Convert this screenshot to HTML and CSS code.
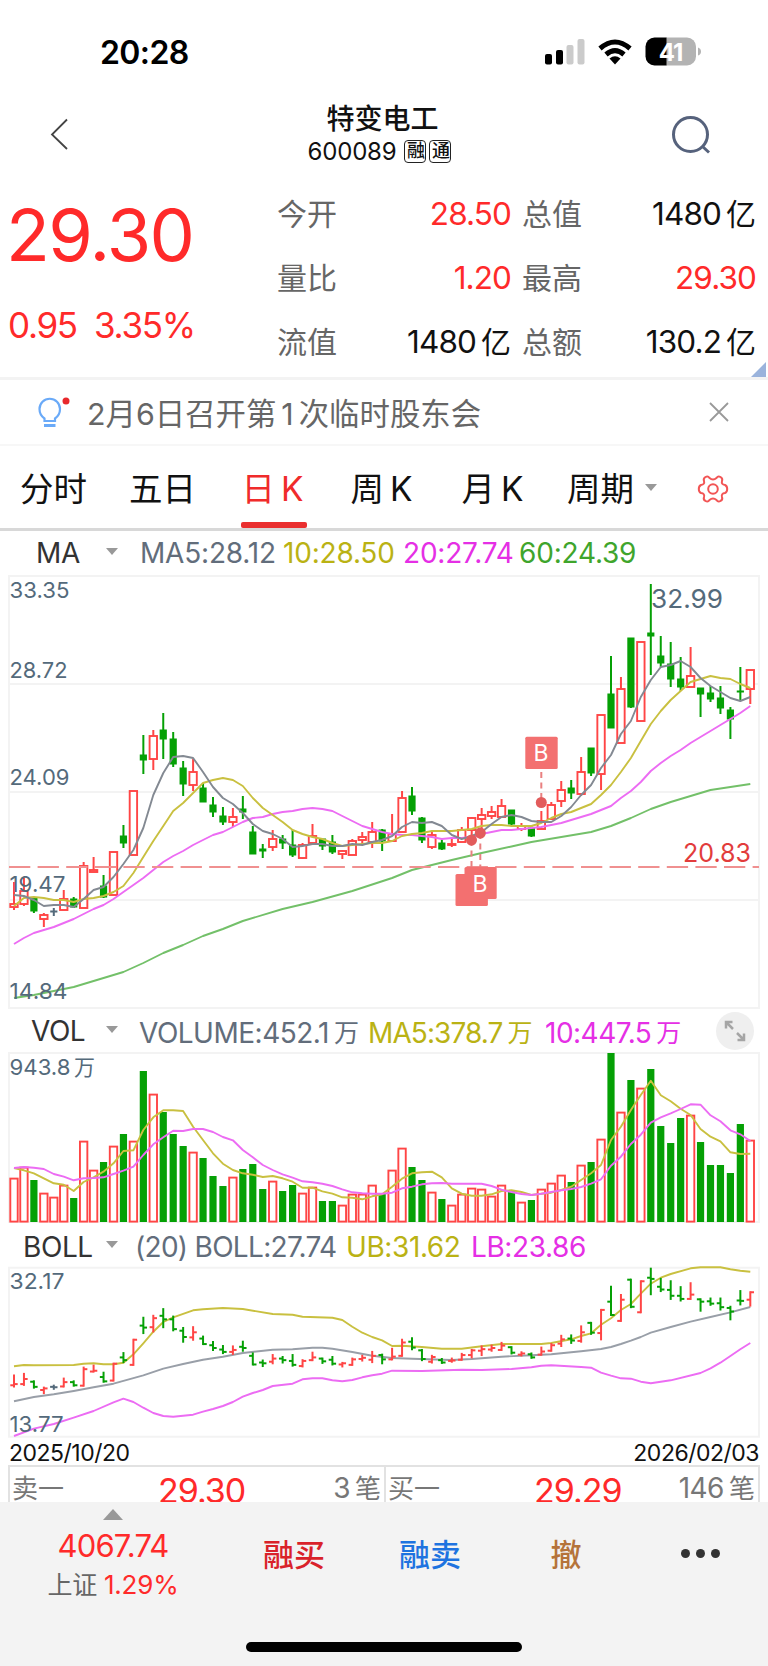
FILE: index.html
```html
<!DOCTYPE html>
<html lang="zh-CN">
<head>
<meta charset="UTF-8">
<meta name="viewport" content="width=device-width, initial-scale=1.0">
<title>特变电工 600089</title>
<link rel="stylesheet" href="styles.css">
</head>
<body>
<div class="app">
  <div class="status">
    <span class="time">20:28</span>
    <svg class="status-icons" width="158" height="30" viewBox="544 36 158 30">
      <rect x="545" y="54" width="7" height="10.5" rx="2"/>
      <rect x="556" y="50" width="7" height="14.5" rx="2"/>
      <g fill="#cbcbcb">
        <rect x="566.500" y="45" width="7" height="19.500" rx="2"/>
        <rect x="577.500" y="39" width="7" height="25.500" rx="2"/>
      </g>
      <g fill="none" stroke="#000" stroke-width="5">
        <path d="M600 48.500Q615 35.500 630 48.500"/>
        <path d="M606 54.500Q615 46.800 624 54.500"/>
      </g>
      <path d="M609.500 58.500Q615 54 620.500 58.500L615 64.500Z"/>
      <path fill="#b3b3b3" d="M666 37.500h21a9 9 0 0 1 9 9v10a9 9 0 0 1-9 9h-21z"/>
      <path d="M666.500 37.500h-12a9 9 0 0 0-9 9v10a9 9 0 0 0 9 9h12z"/>
      <path fill="#b3b3b3" d="M698 47.500q3 1 3 4t-3 4z"/>
      <text class="battery" x="670.500" y="60.500" text-anchor="middle">41</text>
    </svg>
  </div>

  <div class="head">
    <svg class="back" width="20" height="34" viewBox="0 0 20 34"><path d="M18 2.500L3 17.500L18 32"/></svg>
    <div class="stock">
      <div class="name">特变电工</div>
      <div class="code">600089<i>融</i><i>通</i></div>
    </div>
    <svg class="search" width="40" height="40" viewBox="0 0 40 40"><circle cx="19.500" cy="19.500" r="17"/><path d="M31 31l7 6.500"/></svg>
  </div>

  <div class="quote">
    <div class="price">
      <div class="now">29.30</div>
      <div class="chg"><span>0.95</span><span>3.35%</span></div>
    </div>
    <div class="grid">
      <label>今开</label><b class="up">28.50</b><label>总值</label><b>1480<u>亿</u></b>
      <label>量比</label><b class="up">1.20</b><label>最高</label><b class="up">29.30</b>
      <label>流值</label><b>1480<u>亿</u></b><label>总额</label><b>130.2<u>亿</u></b>
    </div>
    <div class="corner"></div>
  </div>

  <div class="notice">
    <svg class="bulb" width="34" height="36" viewBox="36 394 34 36">
      <path d="M44.500 421v-2.500q-5-3.500-5-9.500a10 10 0 0 1 20.500 0q0 6-5 9.500v2.500z"/>
      <path d="M44 425.500h11.500" stroke-width="3"/>
      <circle cx="66" cy="401" r="3.500" stroke="none" fill="#e8282c"/>
    </svg>
    <span class="msg">2月6日召开第<em>1</em>次临时股东会</span>
    <svg class="close" width="20" height="20" viewBox="0 0 20 20"><path d="M1 1l18 18M19 1L1 19"/></svg>
  </div>

  <div class="tabs">
    <span>分时</span>
    <span>五日</span>
    <span class="on">日<em>K</em></span>
    <span>周<em>K</em></span>
    <span>月<em>K</em></span>
    <span>周期</span>
    <i class="tri"></i>
    <svg class="gear" width="34" height="32" viewBox="-17 -16 34 32">
      <path d="M-3.500-11Q0-8 3.500-11Q5-13.500 7.500-12Q10-10.500 9-8Q8-4.500 12-4Q14.200-3 14.200 0Q14.200 3 12 4Q8 4.500 9 8Q10 10.500 7.500 12Q5 13.500 3.500 11Q0 8-3.500 11Q-5 13.500-7.500 12Q-10 10.500-9 8Q-8 4.500-12 4Q-14.200 3-14.200 0Q-14.200-3-12-4Q-8-4.500-9-8Q-10-10.500-7.500-12Q-5-13.500-3.500-11Z"/>
      <circle r="4.800"/>
    </svg>
  </div>

  <div class="legend ma">
    <span class="ind">MA</span><i class="tri"></i>
    <span class="c1">MA5:28.12</span><span class="c2">10:28.50</span><span class="c3">20:27.74</span><span class="c4">60:24.39</span>
  </div>
  <svg id="kline" width="768" height="440"></svg>

  <div class="legend vol">
    <span class="ind">VOL</span><i class="tri"></i>
    <span class="c1">VOLUME:452.1<u>万</u></span><span class="c2">MA5:378.7<u>万</u></span><span class="c3">10:447.5<u>万</u></span>
    <svg class="full" width="38" height="38" viewBox="-19 -19 38 38"><circle r="19"/><path d="M-2-2L-9-9M-9-2.500V-9H-2.500M2 2L9 9M9 2.500V9H2.500"/></svg>
  </div>
  <svg id="volume" width="768" height="176"></svg>

  <div class="legend boll">
    <span class="ind">BOLL</span><i class="tri"></i>
    <span class="c1">(20) BOLL:27.74</span><span class="c2">UB:31.62</span><span class="c3">LB:23.86</span>
  </div>
  <svg id="boll" width="768" height="174"></svg>

  <div class="dates"><span>2025/10/20</span><span>2026/02/03</span></div>

  <div class="book">
    <div class="side"><span>卖一</span><b>29.30</b><span class="qty">3<u>笔</u></span></div>
    <div class="side"><span>买一</span><b>29.29</b><span class="qty">146<u>笔</u></span></div>
  </div>

  <div class="bar">
    <div class="index">
      <i class="tri-up"></i>
      <div class="point">4067.74</div>
      <div class="rate">上证 <b>1.29%</b></div>
    </div>
    <div class="btn buy">融买</div>
    <div class="btn sell">融卖</div>
    <div class="btn cancel">撤</div>
    <div class="more"><i></i><i></i><i></i></div>
    <div class="home"></div>
  </div>
</div>
<script src="chart.js"></script>
</body>
</html>
```

FILE: styles.css
```css
*{box-sizing:border-box;margin:0;padding:0}
body{background:#fff;font-family:Inter,"Noto Sans CJK SC",sans-serif;color:#111}
i,em{font-style:normal}
b{font-weight:400}
u{text-decoration:none}
svg{display:block;flex:none}
.app{width:768px;height:1666px;overflow:hidden;display:flex;flex-direction:column}
.app>*{flex:none}
.up{color:#ff2a2a}

.status{height:96px;padding:36px 66px 0 100px;display:flex;justify-content:space-between;align-items:flex-start}
.time{font-size:32px;font-weight:600;line-height:34px;letter-spacing:-.6px;color:#000}
.battery{font-size:24px;font-weight:700;fill:#fff;letter-spacing:-1px}

.head{height:84px;padding:0 57px 0 49px;display:flex;justify-content:space-between}
.back{margin-top:21px;fill:none;stroke:#444;stroke-width:1.8}
.search{margin-top:19px;fill:none;stroke:#56627c;stroke-width:3}
.stock{width:160px;margin-left:25px;text-align:center;white-space:nowrap}
.name{font-size:28px;font-weight:500;line-height:34px;padding-top:6px}
.code{display:flex;justify-content:center;align-items:center;height:26px;margin:2px 6px 0 0;font-size:24px;letter-spacing:-.2px}
.code i{width:22px;height:23px;margin-left:3px;border:1.500px solid #222;border-radius:4px;font-size:18px;font-weight:500;line-height:20px;text-indent:1px;letter-spacing:0}
.code i:first-of-type{margin-left:8px}

.quote{position:relative;height:200px;display:flex;border-bottom:3px solid #f3f3f3}
.price{width:277px;padding-left:6px;color:#ff2a2a}
.now{font-size:72px;line-height:72px;margin-top:19px;letter-spacing:-1.600px}
.chg{display:flex;font-size:35px;line-height:40px;margin:34px 0 0 2px;letter-spacing:-1.300px}
.chg span:first-child{width:86px}
.grid{width:479px;display:grid;grid-template-columns:62px 172px 73px 172px;grid-auto-rows:64px;margin-top:1.500px;line-height:64px}
.grid label{font-size:30px;color:#666}
.grid label:nth-of-type(even){padding-left:11px}
.grid b{font-size:31.500px;text-align:right;letter-spacing:-.900px;white-space:nowrap}
.grid u{font-size:30px;margin-left:5px;letter-spacing:0}
.corner{position:absolute;right:2px;bottom:0;border-left:15px solid transparent;border-bottom:15px solid #9ab3dc}

.notice{height:66px;padding:0 39px 0 36px;display:flex;align-items:center;border-bottom:2px solid #f7f7f7}
.bulb{fill:none;stroke:#6aaaf8;stroke-width:2.200;margin-bottom:1px}
.msg{flex:1;margin-left:17px;font-size:30.400px;color:#666;white-space:nowrap}
.msg em{margin:0 5px}
.close{stroke:#999;stroke-width:1.800;fill:none}

.tabs{height:85px;display:flex;align-items:center;border-bottom:3px solid #d8d8d8;font-size:33.500px;padding-left:20px}
.tabs span{height:82px;line-height:86px;width:67px;margin-right:42px;text-align:center;white-space:nowrap}
.tabs em{margin-left:6px}
.tabs .on{color:#f02b2b;position:relative;margin-left:1px}
.tabs .on::after{content:"";position:absolute;left:2px;bottom:0;width:66px;height:6px;border-radius:2px;background:#ea2f2f}
.tabs span:nth-child(5){margin-left:2px}
.tabs span:nth-child(6){margin-right:11px;margin-left:-1px}
.tri{width:0;height:0;border:6px solid transparent;border-top:7px solid #999;border-bottom:0}
.gear{fill:none;stroke:#f25555;stroke-width:2;margin-left:39px;margin-top:3px}

.legend{display:grid;align-items:center;font-size:28px;letter-spacing:-.2px;white-space:nowrap}
.legend .ind{color:#333}
.legend .tri{margin-left:-1px;margin-bottom:4px}
.legend.ma{height:39px;padding:5px 0 0 36px;grid-template-columns:71px 33px 143px 120px 116px auto}
.legend.vol{height:40px;padding:2px 14px 0 31px;grid-template-columns:76px 32px 229px 177px 171px 38px}
.legend.boll{height:40px;padding:1px 0 0 23px;grid-template-columns:84px 28px 211px 125px auto;letter-spacing:-.400px}
.legend.vol span{letter-spacing:-.500px}
.legend.vol .c2{letter-spacing:-.900px}
.legend.boll .c1{letter-spacing:-.700px}
.legend u{font-size:25px;margin-left:5px;vertical-align:1px}
.c1{color:#626d7b}
.c2{color:#bab214}
.c3{color:#e52fe5}
.c4{color:#3fa52c}
.full{fill:#efefef}
.full path{fill:none;stroke:#a5a5a5;stroke-width:2.500}

.axis{font-size:22px;fill:#546a7b}
.peak{font-size:26px;fill:#546a7b}
.cost{font-size:26px;fill:#e23c3c}
.mark{font-size:23px;fill:#fff}

.dates{height:25px;margin-top:1px;padding:0 9px;display:flex;justify-content:space-between;font-size:23px;line-height:24px;letter-spacing:-.5px}
.book{height:37px;margin:-1px 8px 0;display:flex;overflow:hidden;border:2px solid #e2e2e2;border-bottom:0;color:#777}
.side{width:50%;height:44px;padding:0 3px 0 2px;display:flex;font-size:26px;line-height:43px}
.side+.side{border-left:2px solid #e2e2e2}
.side b{margin-left:94px;font-size:34px;color:#ff2a2a;letter-spacing:-1px;line-height:48px}
.side .qty{flex:1;text-align:right;font-size:28px;letter-spacing:-.500px}
.side .qty u{font-size:26px;margin-left:5px;letter-spacing:0}

.bar{position:relative;height:165px;background:#f3f3f3;display:flex}
.index{width:226px;display:flex;flex-direction:column;align-items:center}
.tri-up{border:10px solid transparent;border-top:0;border-bottom:11px solid #999;margin-top:7px}
.point{font-size:31px;line-height:34px;margin-top:9px;letter-spacing:-.800px;color:#ff2a2a}
.rate{font-size:25px;line-height:36px;margin-top:4px;color:#666;letter-spacing:-.2px}
.rate b{font-size:26px;color:#ff2a2a}
.btn{width:136px;text-align:center;font-size:31px;font-weight:500;line-height:44px;padding-top:31px}
.buy{color:#d9222a}
.sell{color:#1e73e0}
.cancel{color:#b5733a}
.more{flex:1;display:flex;gap:6px;padding:47px 0 0 47px}
.more i{width:9px;height:9px;border-radius:50%;background:#333}
.home{position:absolute;left:246px;bottom:15px;width:276px;height:10px;border-radius:5px;background:#000}
```

FILE: chart.js
```js
const RED = '#ff4545', GREEN = '#05a005', GRAY = '#546a7b';
const STEP = 9.95, X0 = 14;

// 涨跌, 最高, 实体上沿, 实体下沿, 最低
const bars = [
  ['r',312,334,337,340],['r',308,321,334,336],['g',327,328,341,343],['r',343,345,349,357],['n',338,341,342,346],
  ['r',320,329,340,340],['g',327,329,337,338],['r',292,296,338,338],['r',287,300,302,302],['g',305,316,327,328],
  ['r',282,282,325,325],['g',255,266,273,278],['r',221,221,285,285],['g',165,185,190,204],['r',160,166,189,200],
  ['g',143,160,169,189],['g',162,169,194,197],['g',191,198,214,226],['r',189,202,215,221],['g',213,218,232,232],
  ['g',227,235,242,247],['g',237,246,252,255],['r',238,247,252,257],['g',226,239,242,249],['g',256,262,284,284],
  ['g',274,279,281,288],['r',260,269,277,281],['g',265,269,273,279],['g',260,275,285,287],['r',273,275,288,289],
  ['r',254,266,273,273],['g',269,269,276,280],['g',265,272,282,284],['r',280,281,284,289],['r',269,271,285,285],
  ['r',262,267,270,274],['r',252,262,272,278],['g',259,260,271,281],['r',244,264,271,271],['r',221,228,262,262],
  ['g',217,226,241,245],['g',247,248,270,273],['r',262,265,277,279],['g',270,273,279,280],['r',269,274,275,277],
  ['r',257,260,272,272],['r',247,248,260,266],['r',238,245,249,260],['r',236,242,246,249],['r',229,236,247,247],
  ['g',240,240,254,256],['r',253,256,259,261],['g',256,258,266,267],['r',241,251,259,259],['r',232,235,249,249],
  ['r',211,220,231,237],['g',210,218,223,229],['r',187,202,224,226],['g',178,178,203,206],['r',145,145,204,220],
  ['g',86,124,158,158],['r',107,119,173,173],['g',68,68,137,138],['r',72,72,151,151],['g',14,63,66,105],
  ['g',66,86,93,97],['g',72,94,109,117],['g',87,109,117,121],['r',77,106,117,117],['g',118,118,124,147],
  ['g',116,123,129,132],['g',116,128,138,144],['g',137,140,149,169],['g',97,121,122,131],['r',100,100,119,134]
];
const vols = [44,55,42,29,25,37,24,81,52,60,76,88,81,151,128,110,88,76,70,64,46,36,45,53,58,33,41,31,37,29,35,21,21,17,28,28,37,28,52,74,55,42,30,23,17,28,34,33,26,37,31,20,22,33,39,47,40,57,60,83,169,110,142,134,153,96,79,104,107,80,57,57,49,98,82];

const ma5 = [325,326,330,336,335,335,337,329,320,317,307,294,280,258,225,203,187,186,188,202,217,228,234,243,254,261,264,269,277,276,274,274,276,276,274,275,272,270,266,257,252,253,252,256,265,269,266,262,254,247,245,247,251,252,252,246,237,225,215,198,185,164,151,127,110,97,95,91,97,108,116,122,128,131,127];
const ma10 = [336,328,327,328,330,330,332,329,328,326,322,316,303,287,271,256,241,233,223,213,210,208,210,216,228,238,245,252,260,264,267,269,273,276,275,274,273,273,271,266,264,263,261,261,261,260,259,256,255,255,256,256,256,253,248,244,242,238,234,225,215,202,188,171,154,141,130,121,112,109,106,108,109,114,118];
const ma20 = [374,368,363,360,357,353,349,344,339,335,329,322,315,308,300,292,286,281,275,270,265,262,257,252,248,247,244,242,241,239,238,239,241,246,251,256,259,262,264,265,265,266,267,269,268,268,267,264,262,260,260,259,258,257,255,253,250,247,244,240,236,228,221,212,201,193,186,180,173,167,161,155,149,143,136];
// 变化平缓的线只记拐点 [序号, y]
const ma60 = [[0,428],[2,425],[4,421],[6,417],[8,411],[10,405],[11,402],[13,393],[15,383],[17,375],[19,366],[21,359],[23,351],[27,339],[30,332],[34,321],[38,308],[40,300],[44,290],[47,283],[50,276.5],[52,272],[55,267],[58,262],[60,256],[62,248],[64,239],[66,232],[68,226],[70,220],[72,217],[74,214]];

const vma5 = [474,481,490,505,520,524,543,516,502,485,460,423,421,360,322,301,301,303,350,390,430,461,480,490,494,501,498,505,515,533,533,544,551,562,563,568,559,553,530,506,490,487,485,502,535,551,557,557,553,543,541,546,555,551,548,540,530,510,490,465,390,350,300,255,212,256,274,296,315,357,380,394,427,432,431];
const vma10 = [474,471,473,477,492,500,511,505,504,502,492,482,470,435,403,382,362,363,357,357,366,381,391,420,442,465,480,493,503,514,517,521,528,538,547,550,551,551,548,535,530,523,520,519,521,521,521,521,528,539,546,552,555,551,546,541,537,531,521,508,467,440,402,374,338,322,310,297,283,284,316,334,361,373,393];

const ub = [[0,424],[1,420],[2,421],[6,420],[7,416],[8,415],[9,418],[10,418],[11,413],[12,388],[13,355],[14,320],[15,291],[16,277],[18,256],[19,253],[21,249],[23,252],[26,267],[28,269],[29,275],[32,278],[33,285],[34,305],[35,323],[36,336],[37,346],[38,363],[39,362],[41,366],[43,371],[45,371],[47,364],[49,357],[53,357],[54,354],[56,343],[57,333],[58,325],[59,299],[60,280],[61,255],[62,237],[63,206],[64,176],[65,158],[66,147],[68,130],[69,127],[71,127],[72,133],[73,137],[74,140]];
const mid = [[0,529],[2,516],[4,508],[6,498],[8,487],[10,476],[13,451],[15,431],[17,417],[19,404],[21,395],[23,384],[26,374],[28,373],[30,368],[31,368],[32,371],[34,381],[36,392],[38,399],[40,401],[44,405],[46,402],[49,395],[52,391],[54,388],[57,379],[59,372],[60,366],[61,357],[62,347],[63,336],[64,323],[66,306],[68,290],[70,276],[72,262],[74,246]];
const lb = [[0,633],[2,611],[4,597],[6,578],[8,558],[10,532],[11,521],[12,531],[13,548],[14,564],[15,573],[16,575],[18,569],[19,560],[20,552],[21,543],[22,531],[23,515],[24,504],[25,495],[26,483],[28,476],[29,463],[30,460],[31,460],[32,466],[33,469],[34,465],[35,457],[36,451],[37,446],[38,437],[41,438],[45,434],[47,435],[50,432],[52,427],[53,422],[54,421],[57,426],[58,428],[59,443],[60,452],[61,460],[62,461],[63,470],[64,475],[66,466],[69,444],[70,430],[71,413],[72,393],[73,373],[74,354]];

const px = i => X0 + i * STEP;
const color = t => t === 'r' ? RED : t === 'g' ? GREEN : GRAY;

function frame(y, h) {
  return `<rect x="9" y="${y}" width="750" height="${h}" fill="none" stroke="#f3f3f3" stroke-width="2"/>`;
}
function line(data, stroke, k = 1, off = 0) {
  const pts = data.map((d, i) => Array.isArray(d) ? [px(d[0]), d[1] * k + off] : [px(i), d * k + off]);
  return `<polyline points="${pts.map(p => p[0].toFixed(1) + ',' + p[1].toFixed(1)).join(' ')}" fill="none" stroke="${stroke}" stroke-width="1.9" stroke-linejoin="round"/>`;
}
function seg(x1, y1, x2, y2, stroke, w = 2) {
  return `<path d="M${x1} ${y1}L${x2} ${y2}" stroke="${stroke}" stroke-width="${w}"/>`;
}
function text(cls, x, y, w, s) {
  return `<text class="${cls}" x="${x}" y="${y}" textLength="${w}" lengthAdjust="spacingAndGlyphs">${s}</text>`;
}

// K线
function drawKline() {
  let s = frame(6, 432);
  [114, 222, 330].forEach(y => s += seg(9, y, 759, y, '#f3f3f3'));
  bars.forEach(([t, hi, a, b, lo], i) => {
    const x = px(i), c = color(t);
    if (hi < a) s += seg(x, hi, x, a, c);
    if (lo > b) s += seg(x, b, x, lo, c);
    if (t === 'r') {
      s += `<rect x="${x - 3.7}" y="${a}" width="7.4" height="${Math.max(b - a, 1)}" fill="#fff" stroke="${c}" stroke-width="1.9"/>`;
    } else {
      s += `<rect x="${x - 3.6}" y="${a - .5}" width="7.2" height="${b - a + 1}" fill="${c}"/>`;
    }
  });
  s += line(ma60, '#73c069') + line(ma20, '#ec6cf3') + line(ma10, '#c9c040') + line(ma5, '#838992');
  s += `<path d="M9 297H759" stroke="#f09090" stroke-width="2" stroke-dasharray="21.3 7.3"/>`;
  s += text('axis', 9.5, 27.5, 60, '33.35') + text('axis', 9.5, 108, 58, '28.72') + text('axis', 9.5, 215, 60, '24.09')
    + text('axis', 9.5, 321.5, 56, '19.47') + text('axis', 9.5, 429, 58, '14.84');
  s += text('peak', 651, 38, 72, '32.99') + text('cost', 683, 291.5, 68, '20.83');
  // 买入标记
  s += `<g stroke="#e98080" stroke-width="2" stroke-dasharray="6 4.5"><path d="M541.3 202V228M471.5 270V304M480.3 263V297"/></g>`;
  s += `<g fill="#e25c5c"><circle cx="541.3" cy="232.5" r="5.5"/><circle cx="471.5" cy="270" r="5.5"/><circle cx="480.3" cy="263" r="5.5"/></g>`;
  s += `<g fill="#f37070"><rect x="525.3" y="166.7" width="32.4" height="32.4" rx="1.5"/><rect x="455.5" y="304" width="32.4" height="32" rx="1.5"/><rect x="464.5" y="297" width="32.2" height="32" rx="1.5"/></g>`;
  s += text('mark', 533.5, 191, 15, 'B') + text('mark', 472.5, 321.5, 15, 'B');
  document.getElementById('kline').innerHTML = s;
}

// 成交量
function drawVolume() {
  let s = frame(3, 169);
  bars.forEach(([t], i) => {
    const x = px(i), y = 172 - vols[i];
    s += t === 'g'
      ? `<rect x="${x - 3.6}" y="${y}" width="7.2" height="${vols[i]}" fill="${GREEN}"/>`
      : `<rect x="${x - 3.7}" y="${y + .6}" width="7.4" height="${vols[i] - 1}" fill="#fff" stroke="${RED}" stroke-width="1.9"/>`;
  });
  s += line(vma5, '#c9c040', 1 / 3, -40) + line(vma10, '#ec6cf3', 1 / 3, -40);
  s += text('axis', 9.5, 25, 61, '943.8') + text('axis', 74, 25, 21, '万');
  document.getElementById('volume').innerHTML = s;
}

// 布林线，美国线沿用K线数据换算
function drawBoll() {
  const conv = y => y * .3925 - 13;
  let s = `<clipPath id="box"><rect x="8" y="0" width="752" height="172"/></clipPath>` + frame(1.7, 169);
  s += '<g clip-path="url(#box)">';
  s += line(ub, '#c9c040', 1 / 3, -41) + line(mid, '#999fa8', 1 / 3, -41) + line(lb, '#ec6cf3', 1 / 3, -41);
  bars.forEach(([t, hi, a, b, lo], i) => {
    const x = px(i), c = color(t);
    const open = conv(t === 'r' ? b : a), close = conv(t === 'r' ? a : b);
    s += seg(x, Math.max(conv(hi) - 1, 1.7), x, conv(lo) + 1, c) + seg(x - 3.7, open, x, open, c) + seg(x, close, x + 3.7, close, c);
  });
  s += '</g>';
  s += text('axis', 9.5, 23, 55, '32.17') + text('axis', 9.5, 166, 54, '13.77');
  document.getElementById('boll').innerHTML = s;
}

drawKline();
drawVolume();
drawBoll();
```
